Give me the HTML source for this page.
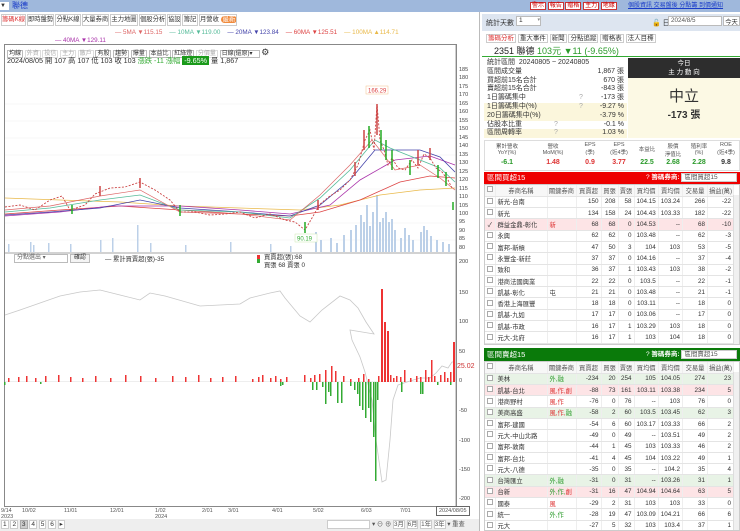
<!DOCTYPE html>
<html><head><meta charset="utf-8">
<style>
*{box-sizing:border-box;margin:0;padding:0}
body{width:740px;height:531px;overflow:hidden;background:#fff;font-family:"Liberation Sans","Noto Sans CJK TC",sans-serif;font-size:7px;color:#333;position:relative}
.a{position:absolute}
.tab{position:absolute;top:14px;height:12px;border:1px solid #ccc;background:#fff;font-size:6.3px;line-height:10px;text-align:center;color:#333;white-space:nowrap;overflow:hidden}
table{border-collapse:collapse;font-size:6.3px}
.tb td{height:11.3px;border-bottom:1px solid #e4e4e4;border-right:1px solid #eee;text-align:right;padding:0 2px;white-space:nowrap;overflow:hidden}
.tb td.n{text-align:left}
.tb td.c{text-align:center;padding:0}
.cb{display:inline-block;width:6px;height:6px;border:1px solid #aaa;background:#fff}
.st div{height:8.8px;line-height:8.8px;position:relative;padding-left:3px;font-size:7px}
.st span{position:absolute;right:3px}
.st i{position:absolute;left:95px;font-style:normal;color:#aaa}
.rb{border:1px solid #c33;background:#fff;color:#c00;padding:0 1px}
</style></head><body>
<div class="a" style="left:0;top:0;width:740px;height:12px;background:#9fb8dc"></div>
<div class="a" style="left:0;top:2px;width:9px;height:8px;background:#fff;font-size:6px;line-height:8px">&#9660;</div>
<div class="a" style="left:12px;top:1px;font-size:8px;color:#1a3cc8;line-height:10px">聯德</div>
<div class="a" style="left:530px;top:2px;font-size:6px;white-space:nowrap;line-height:8px">
<span class="rb">警示</span> <span class="rb">報告</span> <span class="rb">贈格</span> <span class="rb">主力</span> <span class="rb">地緣</span></div>
<div class="a" style="left:628px;top:2px;font-size:6px;color:#1a3cc8;text-decoration:underline;white-space:nowrap;line-height:8px">個股資訊 交易盤後 分點籌 到價通知</div>

<div class="tab" style="left:1px;width:25px;color:#d33">籌碼K線</div>
<div class="tab" style="left:27px;width:27px">即時盤勢</div>
<div class="tab" style="left:55px;width:26px">分點K線</div>
<div class="tab" style="left:82px;width:27px">大量券商</div>
<div class="tab" style="left:110px;width:28px">主力地圖</div>
<div class="tab" style="left:139px;width:27px">個股分析</div>
<div class="tab" style="left:167px;width:14px">協設</div>
<div class="tab" style="left:182px;width:16px">籌記</div>
<div class="tab" style="left:199px;width:38px">月營收 <span style="background:#f08a3c;color:#fff;border-radius:4px;padding:0 2px">最新</span></div>

<div class="a" style="left:115px;top:29px;font-size:6.3px;white-space:nowrap">
<span style="color:#d66">— 5MA ▼115.15</span>&nbsp;&nbsp;&nbsp;&nbsp;<span style="color:#5b9">— 10MA ▼119.00</span>&nbsp;&nbsp;&nbsp;&nbsp;<span style="color:#44a">— 20MA ▼123.84</span>&nbsp;&nbsp;&nbsp;&nbsp;<span style="color:#d44">— 60MA ▼125.51</span>&nbsp;&nbsp;&nbsp;&nbsp;<span style="color:#e9b94a">— 100MA ▲114.71</span></div>
<div class="a" style="left:55px;top:37px;font-size:6.3px;color:#a3a">— 40MA ▼129.11</div>

<div class="a" style="left:4px;top:44px;width:453px;height:463px;border:1px solid #888"></div>
<div class="a" style="left:7px;top:47px;font-size:6px;white-space:nowrap">
<span style="border:1px solid #bbb;padding:0 1px">均線</span> <span style="border:1px solid #ddd;color:#aaa;padding:0 1px">外資</span> <span style="border:1px solid #ddd;color:#aaa;padding:0 1px">投信</span> <span style="border:1px solid #ddd;color:#aaa;padding:0 1px">主力</span> <span style="border:1px solid #ddd;color:#aaa;padding:0 1px">散戶</span> <span style="border:1px solid #bbb;padding:0 1px">有股</span> <span style="border:1px solid #bbb;padding:0 1px">趨勢</span> <span style="border:1px solid #bbb;padding:0 1px">爆量</span> <span style="border:1px solid #bbb;padding:0 1px">本益比</span> <span style="border:1px solid #bbb;padding:0 1px">紅綠燈</span> <span style="border:1px solid #ddd;color:#aaa;padding:0 1px">分價量</span> <span style="border:1px solid #bbb;padding:0 6px 0 1px">日線(還原)▾</span> <span style="font-size:9px">⚙</span></div>
<div class="a" style="left:7px;top:56px;font-size:7.2px;white-space:nowrap">2024/08/05 開 107 高 107 低 103 收 103 <span style="color:#3a3">漲跌 -11 漲幅 </span><span style="background:#1a9a1a;color:#fff;padding:0 2px">-9.65%</span> 量 1,867</div>

<div class="a" style="left:459px;top:66px;font-size:5.5px;line-height:8.47px;color:#444">185<br>180<br>175<br>170<br>165<br>160<br>155<br>150<br>145<br>140<br>135<br>130<br>125<br>120<br>115<br>110<br>105<br>100<br>95<br>90<br>85<br>80</div>
<div class="a" style="left:459px;top:259px;font-size:5.5px;color:#444">200</div>
<div class="a" style="left:459px;top:290px;font-size:5.5px;color:#444">150</div>
<div class="a" style="left:459px;top:319px;font-size:5.5px;color:#444">100</div>
<div class="a" style="left:459px;top:349px;font-size:5.5px;color:#444">50</div>
<div class="a" style="left:459px;top:378px;font-size:5.5px;color:#444">0</div>
<div class="a" style="left:457px;top:363px;font-size:7px;color:#c33">25.02</div>
<div class="a" style="left:459px;top:408px;font-size:5.5px;color:#444">-50</div>
<div class="a" style="left:459px;top:438px;font-size:5.5px;color:#444">-100</div>
<div class="a" style="left:459px;top:467px;font-size:5.5px;color:#444">-150</div>
<div class="a" style="left:459px;top:496px;font-size:5.5px;color:#444">-200</div>

<svg class="a" style="left:0;top:0" width="480" height="531">
<g stroke="#f0f0f0" stroke-width="0.6">
<line x1="5" y1="104" x2="456" y2="104"/><line x1="5" y1="121" x2="456" y2="121"/><line x1="5" y1="138" x2="456" y2="138"/><line x1="5" y1="155" x2="456" y2="155"/><line x1="5" y1="172" x2="456" y2="172"/><line x1="5" y1="189" x2="456" y2="189"/><line x1="5" y1="206" x2="456" y2="206"/><line x1="5" y1="223" x2="456" y2="223"/><line x1="5" y1="240" x2="456" y2="240"/>
</g>
<g fill="#bcd0e8">
<rect x="8" y="244" width="1.5" height="8"/><rect x="30" y="242" width="1.5" height="10"/><rect x="33" y="245" width="1.5" height="7"/><rect x="48" y="243" width="1.5" height="9"/><rect x="70" y="244" width="1.5" height="8"/><rect x="100" y="240" width="1.5" height="12"/><rect x="112" y="238" width="1.5" height="14"/><rect x="137" y="225" width="1.5" height="27"/><rect x="150" y="243" width="1.5" height="9"/><rect x="185" y="245" width="1.5" height="7"/><rect x="230" y="242" width="1.5" height="10"/><rect x="270" y="244" width="1.5" height="8"/><rect x="290" y="246" width="1.5" height="6"/>
<rect x="315" y="232" width="2" height="20"/><rect x="320" y="240" width="2" height="12"/><rect x="330" y="238" width="2" height="14"/><rect x="336" y="243" width="2" height="9"/><rect x="343" y="235" width="2" height="17"/><rect x="350" y="230" width="2" height="22"/><rect x="355" y="225" width="2" height="27"/><rect x="360" y="215" width="2" height="37"/><rect x="363" y="222" width="2" height="30"/><rect x="366" y="205" width="2" height="47"/><rect x="369" y="226" width="2" height="26"/><rect x="372" y="212" width="2" height="40"/><rect x="376" y="195" width="2" height="57"/><rect x="379" y="222" width="2" height="30"/><rect x="382" y="218" width="2" height="34"/><rect x="385" y="212" width="2" height="40"/><rect x="388" y="222" width="2" height="30"/><rect x="391" y="219" width="2" height="33"/><rect x="394" y="230" width="2" height="22"/><rect x="400" y="238" width="2" height="14"/><rect x="404" y="228" width="2" height="24"/><rect x="408" y="235" width="2" height="17"/><rect x="412" y="240" width="2" height="12"/><rect x="420" y="232" width="2" height="20"/><rect x="423" y="226" width="2" height="26"/><rect x="426" y="230" width="2" height="22"/><rect x="430" y="236" width="2" height="16"/><rect x="436" y="240" width="2" height="12"/><rect x="442" y="242" width="2" height="10"/><rect x="448" y="244" width="2" height="8"/>
</g>
<polyline fill="none" stroke="#e9b94a" stroke-width="0.8" points="5,198 60,200 120,202 180,206 240,208 300,210 340,205 380,195 420,190 455,188"/>
<polyline fill="none" stroke="#d44" stroke-width="0.8" points="5,214 60,210 120,206 180,210 240,214 290,216 320,212 360,200 400,182 430,176 455,178"/>
<polyline fill="none" stroke="#a3a" stroke-width="0.8" points="5,216 60,212 110,206 180,206 240,210 290,214 330,205 360,180 395,160 430,156 455,165"/>
<polyline fill="none" stroke="#44a" stroke-width="0.8" points="5,215 50,212 100,208 140,200 180,208 240,212 290,216 320,205 350,180 375,150 400,150 420,150 440,157 455,172"/>
<polyline fill="none" stroke="#5b9" stroke-width="0.8" points="5,212 50,208 100,200 140,195 180,210 240,212 290,218 320,198 350,170 375,140 390,148 420,160 440,168 455,182"/>
<polyline fill="none" stroke="#d66" stroke-width="0.7" points="5,210 50,206 100,196 140,190 180,212 240,214 290,220 320,195 350,165 372,140 380,150 395,170 420,165 440,178 455,190"/>
<polyline fill="none" stroke="#c44" stroke-width="0.9" stroke-dasharray="2 1.5" points="5,207 20,205 35,210 50,200 62,196 70,210 85,205 95,194 110,188 125,187 140,182 155,190 170,200 180,212 195,212 210,215 225,214 240,212 255,218 270,214 285,220 295,222 305,230 312,218 320,204 330,196 340,190 350,180 358,165 365,140 370,130 374,150 377,104 380,140 384,150 388,165 392,158 398,168 405,170 412,160 418,168 424,154 430,158 436,168 442,172 448,180 452,188"/>
<g stroke="#c44" stroke-width="1.5"><line x1="100" y1="186" x2="100" y2="196"/><line x1="140" y1="178" x2="140" y2="188"/><line x1="318" y1="200" x2="318" y2="210"/><line x1="355" y1="162" x2="355" y2="176"/><line x1="364" y1="130" x2="364" y2="150"/><line x1="377" y1="104" x2="377" y2="135"/><line x1="418" y1="150" x2="418" y2="165"/><line x1="430" y1="148" x2="430" y2="160"/></g>
<g stroke="#2a2" stroke-width="1.5"><line x1="72" y1="205" x2="72" y2="214"/><line x1="180" y1="205" x2="180" y2="216"/><line x1="305" y1="222" x2="305" y2="233"/><line x1="369" y1="126" x2="369" y2="148"/><line x1="381" y1="130" x2="381" y2="150"/><line x1="386" y1="140" x2="386" y2="160"/><line x1="392" y1="150" x2="392" y2="170"/><line x1="410" y1="160" x2="410" y2="175"/><line x1="438" y1="165" x2="438" y2="178"/><line x1="446" y1="172" x2="446" y2="186"/><line x1="453" y1="202" x2="453" y2="210"/></g>
<rect x="366" y="86" width="22" height="8" fill="#fff" stroke="#f4c08a" stroke-width="0.5"/>
<text x="368" y="92.5" font-size="6" fill="#d44" font-family="Liberation Sans">166.29</text>
<rect x="295" y="234" width="22" height="8" fill="#fff" stroke="#cde8b0" stroke-width="0.5"/>
<text x="297" y="240.5" font-size="6" fill="#3a3" font-family="Liberation Sans">90.19</text>
<line x1="5" y1="253" x2="456" y2="253" stroke="#888" stroke-width="0.8"/>
<line x1="456" y1="44" x2="456" y2="507" stroke="#888" stroke-width="0.8"/>
<line x1="5" y1="381.5" x2="456" y2="381.5" stroke="#ddd" stroke-width="0.5"/>
<polyline fill="none" stroke="#c8c8c8" stroke-width="0.8" points="5,315 20,310 40,303 60,296 80,292 100,290 120,295 140,300 150,293 165,296 200,306 240,304 250,298 270,293 280,291 285,298 300,316 310,322 322,310 340,296 350,300 358,308 366,322 374,334 350,330 352,340 360,357 365,372 372,400 376,440 380,468 382,482 386,480 390,440 393,400 398,385 410,381 420,378 430,378 436,373 442,366 448,368 452,362 455,362"/>
<g fill="#e33">
<rect x="8" y="378" width="1.5" height="4"/><rect x="18" y="377" width="1.5" height="5"/><rect x="26" y="376" width="1.5" height="6"/><rect x="35" y="378" width="1.5" height="4"/><rect x="45" y="376" width="1.5" height="6"/><rect x="58" y="375" width="1.5" height="7"/><rect x="70" y="377" width="1.5" height="5"/><rect x="82" y="378" width="1.5" height="4"/><rect x="95" y="376" width="1.5" height="6"/><rect x="110" y="378" width="1.5" height="4"/><rect x="125" y="375" width="1.5" height="7"/><rect x="140" y="376" width="1.5" height="6"/><rect x="155" y="378" width="1.5" height="4"/><rect x="172" y="376" width="1.5" height="6"/><rect x="185" y="377" width="1.5" height="5"/><rect x="198" y="375" width="1.5" height="7"/><rect x="210" y="378" width="1.5" height="4"/><rect x="222" y="377" width="1.5" height="5"/><rect x="235" y="376" width="1.5" height="6"/>
<rect x="252" y="379" width="1.5" height="3"/><rect x="258" y="377" width="1.5" height="5"/><rect x="262" y="375" width="1.5" height="7"/><rect x="270" y="378" width="1.5" height="4"/><rect x="275" y="376" width="1.5" height="6"/><rect x="280" y="379" width="1.5" height="3"/><rect x="286" y="377" width="1.5" height="5"/><rect x="304" y="375" width="1.5" height="7"/><rect x="310" y="378" width="1.5" height="4"/><rect x="314" y="375" width="1.5" height="7"/><rect x="319" y="374" width="1.5" height="8"/><rect x="325" y="370" width="1.5" height="12"/><rect x="331" y="366" width="1.5" height="16"/><rect x="335" y="371" width="1.5" height="11"/><rect x="343" y="376" width="1.5" height="6"/><rect x="350" y="379" width="1.5" height="3"/><rect x="358" y="378" width="1.5" height="4"/><rect x="363" y="374" width="1.5" height="8"/><rect x="368" y="379" width="1.5" height="3"/>
<rect x="378" y="376" width="1.5" height="6"/><rect x="381" y="289" width="2" height="93"/><rect x="384" y="322" width="2" height="60"/><rect x="387" y="331" width="2" height="51"/><rect x="390" y="375" width="1.5" height="7"/><rect x="393" y="378" width="1.5" height="4"/><rect x="396" y="376" width="1.5" height="6"/><rect x="400" y="377" width="1.5" height="5"/><rect x="404" y="370" width="1.5" height="12"/><rect x="410" y="378" width="1.5" height="4"/><rect x="416" y="376" width="1.5" height="6"/><rect x="420" y="377" width="1.5" height="5"/><rect x="425" y="370" width="1.5" height="12"/><rect x="428" y="377" width="1.5" height="5"/><rect x="431" y="360" width="1.5" height="22"/><rect x="434" y="376" width="1.5" height="6"/><rect x="440" y="375" width="1.5" height="7"/><rect x="444" y="372" width="1.5" height="10"/><rect x="447" y="378" width="1.5" height="4"/><rect x="450" y="372" width="1.5" height="10"/><rect x="453" y="342" width="2" height="40"/>
</g>
<g fill="#3a3">
<rect x="4" y="382" width="1.5" height="3"/><rect x="40" y="382" width="1.5" height="2"/><rect x="280" y="382" width="1.5" height="4"/><rect x="282" y="382" width="1.5" height="3"/>
<rect x="312" y="382" width="1.5" height="8"/><rect x="316" y="382" width="1.5" height="8"/><rect x="322" y="382" width="1.5" height="5"/><rect x="325" y="382" width="1.5" height="22"/><rect x="328" y="382" width="1.5" height="10"/><rect x="330" y="382" width="1.5" height="14"/><rect x="337" y="382" width="1.5" height="21"/><rect x="341" y="382" width="1.5" height="21"/><rect x="350" y="382" width="1.5" height="4"/><rect x="354" y="382" width="1.5" height="8"/><rect x="357" y="382" width="1.5" height="12"/><rect x="359" y="382" width="1.5" height="24"/><rect x="362" y="382" width="1.5" height="28"/><rect x="365" y="382" width="1.5" height="36"/><rect x="368" y="382" width="1.5" height="26"/><rect x="370" y="382" width="1.5" height="40"/><rect x="373" y="382" width="1.5" height="55"/><rect x="375" y="382" width="1.5" height="99"/><rect x="377" y="382" width="1.5" height="18"/><rect x="401" y="382" width="1.5" height="10"/><rect x="420" y="382" width="1.5" height="12"/><rect x="422" y="382" width="1.5" height="12"/><rect x="437" y="382" width="1.5" height="3"/><rect x="450" y="382" width="1.5" height="3"/>
</g>
</svg>
<div class="a" style="left:14px;top:254px;width:54px;height:9px;border:1px solid #bbb;font-size:6px;line-height:7px;padding-left:2px;color:#666">分點選出 ▾</div>
<div class="a" style="left:70px;top:254px;width:20px;height:9px;border:1px solid #bbb;font-size:6px;line-height:7px;text-align:center;background:#f4f4f4">確認</div>
<div class="a" style="left:105px;top:254px;font-size:6.3px">— 累計買賣超(張)-35</div>
<div class="a" style="left:257px;top:255px;width:3px;height:8px;background:linear-gradient(#e33 50%,#3a3 50%)"></div>
<div class="a" style="left:264px;top:254px;font-size:6.3px;line-height:8px">買賣超(張):68<br>買張 68 賣張 0</div>

<div class="a" style="left:0;top:508px;width:480px;font-size:5.5px;color:#555;line-height:6px">
<span class="a" style="left:1px">9/14<br>2023</span><span class="a" style="left:22px">10/02</span><span class="a" style="left:64px">11/01</span><span class="a" style="left:110px">12/01</span><span class="a" style="left:155px">1/02<br>2024</span><span class="a" style="left:202px">2/01</span><span class="a" style="left:228px">3/01</span><span class="a" style="left:272px">4/01</span><span class="a" style="left:313px">5/02</span><span class="a" style="left:361px">6/03</span><span class="a" style="left:400px">7/01</span><span class="a" style="left:436px;top:-2px;border:1px solid #666;padding:1px 2px;background:#fff">2024/08/05</span></div>
<div class="a" style="left:0;top:519px;width:480px;height:12px;background:#eee"></div>
<div class="a" style="left:1px;top:520px;font-size:6.5px;white-space:nowrap">
<span style="border:1px solid #ccc;background:#fff;padding:0 1px">1</span> <span style="border:1px solid #ccc;background:#fff;padding:0 1px">2</span> <span style="border:1px solid #aaa;background:#ccc;padding:0 1px">3</span> <span style="border:1px solid #ccc;background:#fff;padding:0 1px">4</span> <span style="border:1px solid #ccc;background:#fff;padding:0 1px">5</span> <span style="border:1px solid #ccc;background:#fff;padding:0 1px">6</span> <span style="border:1px solid #ccc;background:#fff;padding:0 1px">▸</span></div>
<div class="a" style="left:327px;top:520px;width:43px;height:9px;border:1px solid #ccc;background:#fff"></div>
<div class="a" style="left:372px;top:519px;font-size:6.3px;white-space:nowrap;color:#555">▾ ⊖ ⊕ <span style="border:1px solid #ccc;background:#fff">3月</span> <span style="border:1px solid #ccc;background:#fff">6月</span> <span style="border:1px solid #ccc;background:#fff">1年</span> <span style="border:1px solid #ccc;background:#fff">3年</span> ▾ 重查</div>

<div class="a" style="left:479px;top:12px;width:1px;height:519px;background:#bbb"></div>
<div class="a" style="left:482px;top:14px;width:258px;height:17px;background:#dde5f0"></div>
<div class="a" style="left:486px;top:18px;font-size:7px">統計天數</div>
<div class="a" style="left:516px;top:16px;width:25px;height:10px;border:1px solid #bbb;background:#fff;font-size:6.5px;padding-left:2px">1 <span style="float:right;font-size:5px;color:#888">▾</span></div>
<div class="a" style="left:652px;top:18px;font-size:7px">&#128275; 日期</div>
<div class="a" style="left:668px;top:16px;width:54px;height:10px;border:1px solid #bbb;background:#fff;font-size:6.3px;padding-left:2px;color:#555">2024/8/5</div>
<div class="a" style="left:723px;top:16px;width:17px;height:10px;border:1px solid #bbb;background:#fff;font-size:6.3px;text-align:center">今天</div>
<div class="a" style="left:486px;top:32px;font-size:6.5px;white-space:nowrap">
<span style="border:1px solid #ccc;color:#d33;padding:0 1px">籌碼分析</span> <span style="border:1px solid #ccc;padding:0 1px">重大事件</span> <span style="border:1px solid #ccc;padding:0 1px">新聞</span> <span style="border:1px solid #ccc;padding:0 1px">分點追蹤</span> <span style="border:1px solid #ccc;padding:0 1px">贈格表</span> <span style="border:1px solid #ccc;padding:0 1px">法人目標</span></div>
<div class="a" style="left:482px;top:43px;width:258px;height:14px;border-bottom:1.5px solid #3a3"></div>
<div class="a" style="left:494px;top:44px;font-size:9px;white-space:nowrap"><b style="font-weight:normal;color:#222">2351 聯德</b> <span style="color:#2a9a2a">103元 ▼11 (-9.65%)</span></div>

<div class="a st" style="left:484px;top:59px;width:143px">
<div>統計區間 &nbsp;20240805 ~ 20240805</div>
<div>區間成交量<span>1,867 張</span></div>
<div>買超前15名合計<span>670 張</span></div>
<div>賣超前15名合計<span>-843 張</span></div>
<div>1日籌碼集中<i>?</i><span>-173 張</span></div>
<div style="background:#fbf6dc">1日籌碼集中(%)<i>?</i><span>-9.27 %</span></div>
<div style="background:#fbf6dc">20日籌碼集中(%)<span>-3.79 %</span></div>
<div>佔股本比重<i style="left:70px">?</i><span>-0.1 %</span></div>
<div style="background:#fbf6dc">區間周轉率<i style="left:70px">?</i><span>1.03 %</span></div>
</div>
<div class="a" style="left:628px;top:58px;width:112px;height:20px;background:#2d2d2d;color:#fff;font-size:6.5px;text-align:center;line-height:9px;padding-top:1px">今日<br>主 力 動 向</div>
<div class="a" style="left:628px;top:78px;width:112px;height:60px;background:#fcf9e4;text-align:center">
<div style="font-size:15px;color:#333;margin-top:7px">中立</div>
<div style="font-size:10px;font-weight:bold;color:#333">-173 張</div></div>

<div class="a" style="left:484px;top:140px;width:256px;height:31px;border:1px solid #ddd"></div>
<div class="a" style="left:484px;top:142px;width:256px;font-size:5.5px;color:#555;text-align:center">
<span class="a" style="left:0;width:46px">累計營收<br>YoY(%)</span><span class="a" style="left:48px;width:42px">營收<br>MoM(%)</span><span class="a" style="left:92px;width:28px">EPS<br>(季)</span><span class="a" style="left:120px;width:30px">EPS<br>(近4季)</span><span class="a" style="left:150px;width:26px;top:3px">本益比</span><span class="a" style="left:176px;width:26px">股價<br>淨值比</span><span class="a" style="left:202px;width:26px">殖利率<br>(%)</span><span class="a" style="left:228px;width:28px">ROE<br>(近4季)</span></div>
<div class="a" style="left:484px;top:159px;width:256px;font-size:7px;font-weight:bold;text-align:center">
<span class="a" style="left:0;width:46px;color:#2a9a2a">-6.1</span><span class="a" style="left:48px;width:42px;color:#d33">1.48</span><span class="a" style="left:92px;width:28px;color:#d33">0.9</span><span class="a" style="left:120px;width:30px;color:#d33">3.77</span><span class="a" style="left:150px;width:26px;color:#2a9a2a">22.5</span><span class="a" style="left:176px;width:26px;color:#2a9a2a">2.68</span><span class="a" style="left:202px;width:26px;color:#2a9a2a">2.28</span><span class="a" style="left:228px;width:28px;color:#333">9.8</span></div>

<div class="a" style="left:484px;top:172px;width:256px;height:12px;background:#e00;color:#fff;font-size:7.5px;line-height:12px;padding-left:3px">區間買超15<span style="position:absolute;left:162px;font-size:6.5px">? <b>籌碼券商:</b> <span style="background:#fff;color:#555;padding:0 18px 0 2px;border:1px solid #ccc">區間買超15</span></span></div>
<div class="a" style="left:484px;top:184px;width:256px;height:161px;border:1px solid #ccc;overflow:hidden">
<table class="tb" style="width:249px">
<tr style="color:#555;background:#f7f7f7"><td class="c" style="width:10px"><span class="cb"></span></td><td class="c" style="width:52px">券商名稱</td><td class="c" style="width:29px">關鍵券商</td><td class="c" style="width:25px">買賣超</td><td class="c" style="width:17px">買張</td><td class="c" style="width:16px">賣張</td><td class="c" style="width:23px">買均價</td><td class="c" style="width:23px">賣均價</td><td class="c" style="width:25px">交易量</td><td class="c">損益(萬)</td></tr>
<tr><td class="c"><span class="cb"></span></td><td class="n">新光-台南</td><td></td><td>150</td><td>208</td><td>58</td><td>104.15</td><td>103.24</td><td>266</td><td>-22</td></tr>
<tr><td class="c"><span class="cb"></span></td><td class="n">新光</td><td></td><td>134</td><td>158</td><td>24</td><td>104.43</td><td>103.33</td><td>182</td><td>-22</td></tr>
<tr style="background:#fde4e6"><td class="c">✓</td><td class="n">群益金鼎-彰化</td><td class="n" style="color:#d33">新</td><td>68</td><td>68</td><td>0</td><td>104.53</td><td>--</td><td>68</td><td>-10</td></tr>
<tr><td class="c"><span class="cb"></span></td><td class="n">永興</td><td></td><td>62</td><td>62</td><td>0</td><td>103.48</td><td>--</td><td>62</td><td>-3</td></tr>
<tr><td class="c"><span class="cb"></span></td><td class="n">富邦-新槓</td><td></td><td>47</td><td>50</td><td>3</td><td>104</td><td>103</td><td>53</td><td>-5</td></tr>
<tr><td class="c"><span class="cb"></span></td><td class="n">永豐金-新莊</td><td></td><td>37</td><td>37</td><td>0</td><td>104.16</td><td>--</td><td>37</td><td>-4</td></tr>
<tr><td class="c"><span class="cb"></span></td><td class="n">致和</td><td></td><td>36</td><td>37</td><td>1</td><td>103.43</td><td>103</td><td>38</td><td>-2</td></tr>
<tr><td class="c"><span class="cb"></span></td><td class="n">港商法國興業</td><td></td><td>22</td><td>22</td><td>0</td><td>103.5</td><td>--</td><td>22</td><td>-1</td></tr>
<tr><td class="c"><span class="cb"></span></td><td class="n">凱基-彰化</td><td class="n">屯</td><td>21</td><td>21</td><td>0</td><td>103.48</td><td>--</td><td>21</td><td>-1</td></tr>
<tr><td class="c"><span class="cb"></span></td><td class="n">香港上海匯豐</td><td></td><td>18</td><td>18</td><td>0</td><td>103.11</td><td>--</td><td>18</td><td>0</td></tr>
<tr><td class="c"><span class="cb"></span></td><td class="n">凱基-九如</td><td></td><td>17</td><td>17</td><td>0</td><td>103.06</td><td>--</td><td>17</td><td>0</td></tr>
<tr><td class="c"><span class="cb"></span></td><td class="n">凱基-市政</td><td></td><td>16</td><td>17</td><td>1</td><td>103.29</td><td>103</td><td>18</td><td>0</td></tr>
<tr><td class="c"><span class="cb"></span></td><td class="n">元大-北府</td><td></td><td>16</td><td>17</td><td>1</td><td>103</td><td>104</td><td>18</td><td>0</td></tr>
<tr><td class="c"><span class="cb"></span></td><td class="n">台新</td><td></td><td>15</td><td>15</td><td>0</td><td>103.2</td><td>--</td><td>15</td><td>0</td></tr>
</table>
<div class="a" style="right:0;top:10px;width:6px;height:150px;background:#f0f0f0;border-left:1px solid #ddd"></div>
</div>

<div class="a" style="left:484px;top:348px;width:256px;height:13px;background:#0a7a0a;color:#fff;font-size:7.5px;line-height:13px;padding-left:3px">區間賣超15<span style="position:absolute;left:162px;font-size:6.5px">? <b>籌碼券商:</b> <span style="background:#fff;color:#555;padding:0 18px 0 2px;border:1px solid #ccc">區間賣超15</span></span></div>
<div class="a" style="left:484px;top:361px;width:256px;height:170px;border:1px solid #ccc;overflow:hidden">
<table class="tb" style="width:249px">
<tr style="color:#555;background:#f7f7f7"><td class="c" style="width:10px"><span class="cb"></span></td><td class="c" style="width:52px">券商名稱</td><td class="c" style="width:29px">關鍵券商</td><td class="c" style="width:25px">買賣超</td><td class="c" style="width:17px">買張</td><td class="c" style="width:16px">賣張</td><td class="c" style="width:23px">買均價</td><td class="c" style="width:23px">賣均價</td><td class="c" style="width:25px">交易量</td><td class="c">損益(萬)</td></tr>
<tr style="background:#e8f3e6"><td class="c"><span class="cb"></span></td><td class="n">美林</td><td class="n" style="color:#2a9a2a">外,融</td><td>-234</td><td>20</td><td>254</td><td>105</td><td>104.05</td><td>274</td><td>23</td></tr>
<tr style="background:#fde4e6"><td class="c"><span class="cb"></span></td><td class="n">凱基-台北</td><td class="n" style="color:#d33">風,作,創</td><td>-88</td><td>73</td><td>161</td><td>103.11</td><td>103.38</td><td>234</td><td>5</td></tr>
<tr><td class="c"><span class="cb"></span></td><td class="n">港商野村</td><td class="n" style="color:#d33">風,作</td><td>-76</td><td>0</td><td>76</td><td>--</td><td>103</td><td>76</td><td>0</td></tr>
<tr style="background:#e8f3e6"><td class="c"><span class="cb"></span></td><td class="n">美商高盛</td><td class="n" style="color:#d33">風,作,<span style="color:#2a9a2a">融</span></td><td>-58</td><td>2</td><td>60</td><td>103.5</td><td>103.45</td><td>62</td><td>3</td></tr>
<tr><td class="c"><span class="cb"></span></td><td class="n">富邦-建國</td><td></td><td>-54</td><td>6</td><td>60</td><td>103.17</td><td>103.33</td><td>66</td><td>2</td></tr>
<tr><td class="c"><span class="cb"></span></td><td class="n">元大-中山北路</td><td></td><td>-49</td><td>0</td><td>49</td><td>--</td><td>103.51</td><td>49</td><td>2</td></tr>
<tr><td class="c"><span class="cb"></span></td><td class="n">富邦-敦南</td><td></td><td>-44</td><td>1</td><td>45</td><td>103</td><td>103.33</td><td>46</td><td>2</td></tr>
<tr><td class="c"><span class="cb"></span></td><td class="n">富邦-台北</td><td></td><td>-41</td><td>4</td><td>45</td><td>104</td><td>103.22</td><td>49</td><td>1</td></tr>
<tr><td class="c"><span class="cb"></span></td><td class="n">元大-八德</td><td></td><td>-35</td><td>0</td><td>35</td><td>--</td><td>104.2</td><td>35</td><td>4</td></tr>
<tr style="background:#e8f3e6"><td class="c"><span class="cb"></span></td><td class="n">台灣匯立</td><td class="n" style="color:#2a9a2a">外,融</td><td>-31</td><td>0</td><td>31</td><td>--</td><td>103.26</td><td>31</td><td>1</td></tr>
<tr style="background:#fde4e6"><td class="c"><span class="cb"></span></td><td class="n">台新</td><td class="n" style="color:#2a9a2a">外,作,<span style="color:#d33">創</span></td><td>-31</td><td>16</td><td>47</td><td>104.94</td><td>104.64</td><td>63</td><td>5</td></tr>
<tr><td class="c"><span class="cb"></span></td><td class="n">國泰</td><td class="n" style="color:#d33">風</td><td>-29</td><td>2</td><td>31</td><td>103</td><td>103</td><td>33</td><td>0</td></tr>
<tr><td class="c"><span class="cb"></span></td><td class="n">統一</td><td class="n" style="color:#2a9a2a">外,作</td><td>-28</td><td>19</td><td>47</td><td>103.09</td><td>104.21</td><td>66</td><td>6</td></tr>
<tr><td class="c"><span class="cb"></span></td><td class="n">元大</td><td></td><td>-27</td><td>5</td><td>32</td><td>103</td><td>103.4</td><td>37</td><td>1</td></tr>
</table>
<div class="a" style="right:0;top:10px;width:6px;height:160px;background:#f0f0f0;border-left:1px solid #ddd"></div>
</div>
</body></html>
